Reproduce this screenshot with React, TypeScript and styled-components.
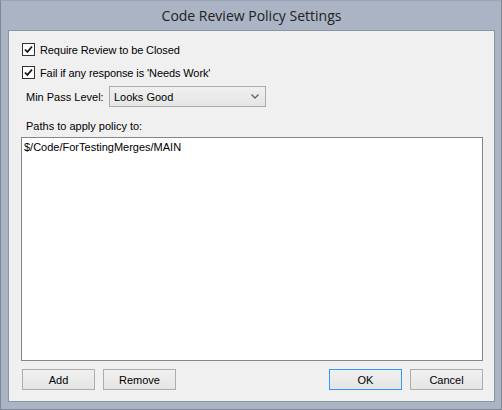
import React from "react";
import styled, { createGlobalStyle } from "styled-components";

const Global = createGlobalStyle`
  html, body { margin: 0; padding: 0; background: #c9d0da; }
  body { font-family: "Liberation Sans", Arial, sans-serif; }
`;

const Window = styled.div`
  box-sizing: border-box;
  width: 502px;
  height: 410px;
  background: #aab4c4;
  border: 1px solid #7f8897;
  border-top-color: #9aa4b4;
  display: flex;
  flex-direction: column;
  padding: 0 6px 7px 7px;
`;

const TitleBar = styled.div`
  height: 29px;
  display: flex;
  align-items: center;
  justify-content: center;
  font-family: "Open Sans", "Noto Sans", sans-serif;
  font-size: 14px;
  color: #222;
  padding-bottom: 1px;
  box-sizing: border-box;
`;

const Client = styled.div`
  flex: 1;
  background: #f0f0f0;
  border: 1px solid #8b94a2;
  display: flex;
  flex-direction: column;
  padding: 12px 11px 0 12px;
  font-size: 11px;
  color: #000;
`;

const CheckRow = styled.label<{ $mb?: number }>`
  display: flex;
  align-items: center;
  gap: 5px;
  height: 13px;
  margin-left: 1px;
  margin-bottom: ${(p) => p.$mb ?? 0}px;
  letter-spacing: -0.1px;
`;

const Box = styled.span`
  box-sizing: border-box;
  width: 13px;
  height: 13px;
  border: 1px solid #333;
  background: #fff;
  display: flex;
  align-items: center;
  justify-content: center;
`;

const FieldRow = styled.div`
  display: flex;
  align-items: center;
  margin-top: 7px;
  padding-left: 5px;
`;

const FieldLabel = styled.span`
  width: 83px;
`;

const Select = styled.div`
  box-sizing: border-box;
  width: 157px;
  height: 21px;
  border: 1px solid #acacac;
  background: linear-gradient(#f0f0f0, #e5e5e5);
  display: flex;
  align-items: center;
  justify-content: space-between;
  padding: 0 6px 0 4px;
`;

const SectionLabel = styled.div`
  margin-top: 13px;
  padding-left: 5px;
  height: 13px;
  line-height: 13px;
`;

const ListBox = styled.div`
  box-sizing: border-box;
  height: 224px;
  margin-top: 4px;
  background: #fff;
  border: 1px solid #828790;
  padding: 3px 2px;
  line-height: 13px;
`;

const ButtonRow = styled.div`
  display: flex;
  margin-top: 8px;
  padding-left: 1px;
`;

const Spacer = styled.div`
  flex: 1;
`;

const Button = styled.button<{ $default?: boolean; $ml?: number }>`
  box-sizing: border-box;
  width: 73px;
  height: 21px;
  margin-left: ${(p) => p.$ml ?? 0}px;
  font-family: "Liberation Sans", Arial, sans-serif;
  font-size: 11px;
  color: #000;
  background: linear-gradient(#f0f0f0, #e5e5e5);
  border: 1px solid ${(p) => (p.$default ? "#3399ff" : "#adadad")};
  padding: 0;
`;

const Check = () => (
  <svg width="9" height="9" viewBox="0 0 9 9">
    <path d="M1 4.5 L3.4 7 L8 1.5" fill="none" stroke="#111" strokeWidth="1.8" />
  </svg>
);

const Chevron = () => (
  <svg width="8" height="5" viewBox="0 0 8 5">
    <path d="M0.5 0.5 L4 4 L7.5 0.5" fill="none" stroke="#606060" strokeWidth="1.3" />
  </svg>
);

export default function App() {
  return (
    <>
      <Global />
      <Window>
        <TitleBar>Code Review Policy Settings</TitleBar>
        <Client>
          <CheckRow $mb={10}>
            <Box><Check /></Box>
            Require Review to be Closed
          </CheckRow>
          <CheckRow>
            <Box><Check /></Box>
            Fail if any response is 'Needs Work'
          </CheckRow>
          <FieldRow>
            <FieldLabel>Min Pass Level:</FieldLabel>
            <Select>
              <span>Looks Good</span>
              <Chevron />
            </Select>
          </FieldRow>
          <SectionLabel>Paths to apply policy to:</SectionLabel>
          <ListBox>$/Code/ForTestingMerges/MAIN</ListBox>
          <ButtonRow>
            <Button>Add</Button>
            <Button $ml={8}>Remove</Button>
            <Spacer />
            <Button $default>OK</Button>
            <Button $ml={8}>Cancel</Button>
          </ButtonRow>
        </Client>
      </Window>
    </>
  );
}
